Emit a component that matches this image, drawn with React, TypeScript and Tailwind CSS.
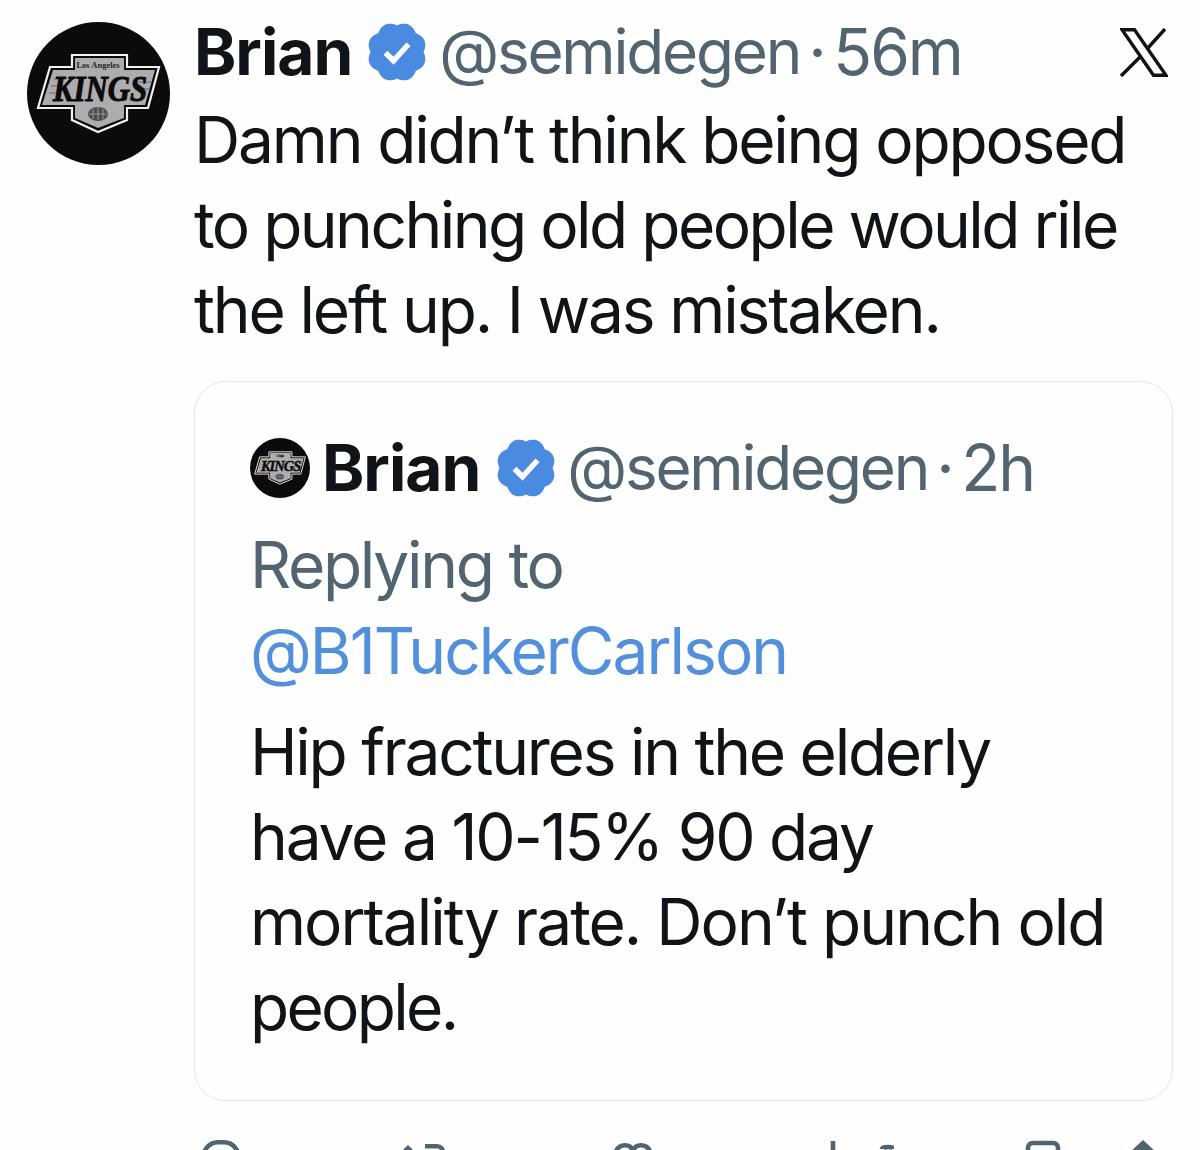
const font = "font-['Inter','Liberation_Sans',sans-serif]";

function Badge({ className }: { className: string }) {
  const pts: string[] = [];
  const n = 120;
  for (let i = 0; i < n; i++) {
    const a = (i / n) * Math.PI * 2;
    const r = 10.6 + 1.3 * Math.abs(Math.cos(a * 4 + Math.PI / 2));
    pts.push(`${(12 + r * Math.cos(a)).toFixed(2)},${(12 + r * Math.sin(a)).toFixed(2)}`);
  }
  return (
    <svg viewBox="0 0 24 24" className={className}>
      <polygon points={pts.join(" ")} fill="#4a8ae0" />
      <path d="M7.4 12.3l3.2 3.2 6-6.6" fill="none" stroke="#fff" strokeWidth="2.2" />
    </svg>
  );
}

function Kings({ className }: { className: string }) {
  const shape = "M45 33H100V45H132L121 86H100V98L71 110L45 98V86H11L23 45H45Z";
  return (
    <svg viewBox="0 0 143 143" className={className}>
      <circle cx="71.5" cy="71.5" r="71.5" fill="#0b0b0b" />
      <path d={shape} fill="#0b0b0b" stroke="#f2f2f2" strokeWidth="2.2" />
      <path d="M48 36H97V48H128L118 83H97V96L71 106L48 96V83H15L26 48H48Z" fill="#adadad" />
      <path d="M27 57H40M24 64H36M22 71H34M110 60H124M108 67H122" stroke="#6a6a6a" strokeWidth="1.2" />
      <text x="71" y="46" textAnchor="middle" fontFamily="Liberation Serif, serif" fontWeight="700" fontSize="8.5" fill="#262626">Los Angeles</text>
      <text x="73" y="79" textAnchor="middle" fontFamily="Liberation Serif, serif" fontStyle="italic" fontWeight="700" fontSize="36" fill="#0b0b0b" stroke="#0b0b0b" strokeWidth="1" textLength="94" lengthAdjust="spacingAndGlyphs">KINGS</text>
      <ellipse cx="71" cy="92" rx="10" ry="7" fill="#4d4d4d" />
      <path d="M62 92h18M66 87v10M71 85v13M76 87v10" stroke="#9a9a9a" strokeWidth="1" />
    </svg>
  );
}

function XLogo() {
  return (
    <svg viewBox="0 0 48 49" className="h-[49px] w-[48px]">
      <path d="M2 1.7H14.5L46 47.3H33.5Z" fill="none" stroke="#0f1419" strokeWidth="3.4" />
      <path d="M45 1 27 21M21 28 1 48" fill="none" stroke="#0f1419" strokeWidth="3.4" />
    </svg>
  );
}

function ActionIcons() {
  const s = { fill: "none", stroke: "#536471", strokeWidth: 4.6 };
  return (
    <div className="mt-[39px] flex h-[30px] items-start">
      <svg className="ml-[6px] shrink-0" width="42" height="30" viewBox="0 0 42 30"><path d="M2 24C2 10 9 2.300 18 2.300h6C33 2.300 40 10 40 24" {...s} /></svg>
      <svg className="ml-[153px] shrink-0" width="52" height="30" viewBox="0 0 52 30"><path d="M13 7 2 18H24ZM13 10V30" fill="#536471" stroke="#536471" strokeWidth="3" /><path d="M30 6.300H42C46 6.300 48 9 48 13V30" {...s} /></svg>
      <svg className="ml-[165px] shrink-0" width="42" height="30" viewBox="0 0 42 30"><path d="M2.300 22C2.300 9 7 5.300 13 5.300c4 0 7 2 8 6 1-4 4-6 8-6 6 0 10.700 4 10.700 17" {...s} /></svg>
      <svg className="ml-[166px] shrink-0" width="74" height="30" viewBox="0 0 74 30"><path d="M13 1V30M68 10V30" {...s} /><path d="M62 9a6 2 0 0 1 12 0" {...s} /></svg>
      <svg className="ml-[131px] shrink-0" width="36" height="30" viewBox="0 0 36 30"><path d="M3 30V8c0-3 2-5 5-5h20c3 0 5 2 5 5v22" {...s} /></svg>
      <svg className="ml-[64px] shrink-0" width="36" height="30" viewBox="0 0 36 30"><path d="M18 2 5 14H31ZM18 6V30" fill="#536471" stroke="#536471" strokeWidth="3" /></svg>
    </div>
  );
}

const body = "text-[64px] tracking-[-2.4px]";
const name = "font-bold tracking-[-1px]";
const handle = "text-[62px] tracking-[-2.2px] text-[#536471]";

export default function App() {
  return (
    <div className={`h-[1150px] w-[1200px] overflow-hidden bg-[#fefefe] pl-[27px] pr-[27px] pt-[22px] text-[#0f1419] ${font}`}>
      <div className="flex">
        <Kings className="h-[143px] w-[143px] shrink-0" />
        <div className="ml-[24px] min-w-0 flex-1">
          <div className={`flex h-[60px] items-center leading-[60px] ${body}`}>
            <span className={name}>Brian</span>
            <Badge className="ml-[15px] h-[60px] w-[60px] shrink-0" />
            <span className={`ml-[12px] ${handle}`}>@semidegen</span>
            <span className="ml-[8px] mr-[9px] text-[#536471]">·</span>
            <span className="tracking-[-2px] text-[#536471]">56m</span>
            <span className="ml-auto mr-[5px]"><XLogo /></span>
          </div>
          <p className="mt-[15px] text-[64px] leading-[85px]">
            <span className="tracking-[-2.17px]">Damn didn’t think being opposed</span><br />
            <span className="tracking-[-2.52px]">to punching old people would rile</span><br />
            <span className="tracking-[-2.15px]">the left up. I was mistaken.</span>
          </p>
          <div className="mt-[29px] h-[720px] rounded-[32px] border-[1.5px] border-[#e3e6e9] pl-[55px] pt-[56px]">
            <div className={`flex h-[60px] items-center leading-[60px] ${body}`}>
              <Kings className="h-[60px] w-[60px] shrink-0" />
              <span className={`ml-[12px] ${name}`}>Brian</span>
              <Badge className="ml-[16px] h-[60px] w-[60px] shrink-0" />
              <span className={`ml-[11px] ${handle}`}>@semidegen</span>
              <span className="ml-[8px] mr-[9px] text-[#536471]">·</span>
              <span className="tracking-[-2px] text-[#536471]">2h</span>
            </div>
            <p className="mt-[24px] text-[64px] leading-[86px] tracking-[-2.3px] text-[#536471]">Replying to</p>
            <p className="text-[64px] leading-[86px] tracking-[-2px] text-[#5390dc]">@B1TuckerCarlson</p>
            <p className="mt-[15px] text-[64px] leading-[85px]">
              <span className="tracking-[-2.25px]">Hip fractures in the elderly</span><br />
              <span className="tracking-[-2.2px]">have a 10-15% 90 day</span><br />
              <span className="tracking-[-1.98px]">mortality rate. Don’t punch old</span><br />
              <span className="tracking-[-2.7px]">people.</span>
            </p>
          </div>
          <ActionIcons />
        </div>
      </div>
    </div>
  );
}
